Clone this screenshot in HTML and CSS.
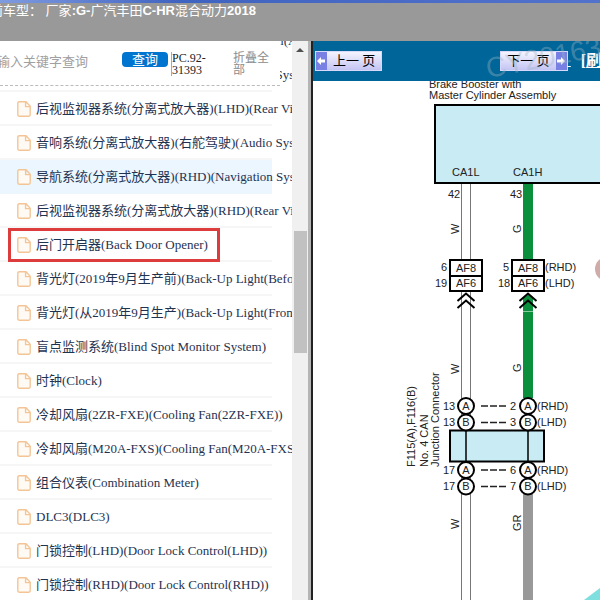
FILE: index.html
```html
<!DOCTYPE html>
<html lang="zh-CN">
<head>
<meta charset="utf-8">
<title>广汽丰田C-HR混合动力2018</title>
<link rel="stylesheet" href="styles.css">
</head>
<body>
<svg class="defs" width="0" height="0" aria-hidden="true">
  <symbol id="doc" viewBox="0 0 14 16"><path d="M2.2.8H9l4.2 4.4v8.6q0 1.4-1.4 1.4H2.2Q.8 15.2.8 13.8V2.2Q.8.8 2.2.8ZM8.6 1v4.6H13" fill="#fffaf3" stroke="#f3c596" stroke-width="1.4"/></symbol>
</svg>
<header class="top"><p class="model">前车型： 厂家<b>:G-</b>广汽丰田<b>C-HR</b>混合动力<b>2018</b></p></header>
<main class="frames">
  <aside class="side">
    <div class="tree">
      <form class="search">
        <input class="query" type="text" aria-label="关键字" placeholder="请输入关键字查询">
        <button class="go" type="button">查询</button>
        <span class="code">PC.92-31393</span>
        <a class="fold" href="#">折叠全部</a>
      </form>
      <ul class="list">
        <li><a href="#"><svg><use href="#doc"/></svg>空调系统(自动空调)(Air Conditioning System(Automatic))</a></li>
        <li><a href="#"><svg><use href="#doc"/></svg>音响系统(分离式放大器)(左舵驾驶)(Audio System(LHD))</a></li>
        <li><a href="#"><svg><use href="#doc"/></svg>后视监视器系统(分离式放大器)(LHD)(Rear View Monitor System)</a></li>
        <li><a href="#"><svg><use href="#doc"/></svg>音响系统(分离式放大器)(右舵驾驶)(Audio System(RHD))</a></li>
        <li class="hover"><a href="#"><svg><use href="#doc"/></svg>导航系统(分离式放大器)(RHD)(Navigation System(RHD))</a></li>
        <li><a href="#"><svg><use href="#doc"/></svg>后视监视器系统(分离式放大器)(RHD)(Rear View Monitor System)</a></li>
        <li><a class="marked" href="#"><svg><use href="#doc"/></svg>后门开启器(Back Door Opener)</a></li>
        <li><a href="#"><svg><use href="#doc"/></svg>背光灯(2019年9月生产前)(Back-Up Light(Before Sep. 2019 Production))</a></li>
        <li><a href="#"><svg><use href="#doc"/></svg>背光灯(从2019年9月生产)(Back-Up Light(From Sep. 2019 Production))</a></li>
        <li><a href="#"><svg><use href="#doc"/></svg>盲点监测系统(Blind Spot Monitor System)</a></li>
        <li><a href="#"><svg><use href="#doc"/></svg>时钟(Clock)</a></li>
        <li><a href="#"><svg><use href="#doc"/></svg>冷却风扇(2ZR-FXE)(Cooling Fan(2ZR-FXE))</a></li>
        <li><a href="#"><svg><use href="#doc"/></svg>冷却风扇(M20A-FXS)(Cooling Fan(M20A-FXS))</a></li>
        <li><a href="#"><svg><use href="#doc"/></svg>组合仪表(Combination Meter)</a></li>
        <li><a href="#"><svg><use href="#doc"/></svg>DLC3(DLC3)</a></li>
        <li><a href="#"><svg><use href="#doc"/></svg>门锁控制(LHD)(Door Lock Control(LHD))</a></li>
        <li><a href="#"><svg><use href="#doc"/></svg>门锁控制(RHD)(Door Lock Control(RHD))</a></li>
      </ul>
    </div>
    <div class="scroll"><span class="up"></span><span class="thumb"></span></div>
  </aside>
  <section class="view">
    <nav class="pager">
      <button class="page" type="button"><span class="arrow"><svg viewBox="0 0 10 10"><path d="M1 5 5 1v2.500h4v3H5V9Z" fill="#fff"/></svg></span><span class="word">上一 页</span></button>
      <button class="page next" type="button"><span class="word">下一 页</span><span class="arrow"><svg viewBox="0 0 10 10"><path d="M9 5 5 1v2.500H1v3h4V9Z" fill="#fff"/></svg></span></button>
      <a class="gap" href="#">&nbsp;</a>
      <span class="refresh">[<a href="#">刷新</a>]</span>
    </nav>
    <svg class="mark" viewBox="0 0 120 60" aria-hidden="true"><text x="8" y="37" transform="rotate(-11 8 37)">CY20163</text></svg>
    <svg class="diagram" viewBox="313 81 287 519" preserveAspectRatio="xMinYMin slice">
      <g class="label">
        <text x="429" y="88">Brake Booster with</text>
        <text x="429" y="99">Master Cylinder Assembly</text>
      </g>
      <rect x="435" y="105" width="190" height="78" fill="#c9ebf3" stroke="#000" stroke-width="2"/>
      <g class="wire">
        <path d="M461.500 184V600M470.500 184V600"/>
      </g>
      <rect x="523" y="184" width="10" height="214" fill="#0c8f3c"/>
      <rect x="523" y="494" width="10" height="106" fill="#999"/>
      <path d="M523 311.500H533" stroke="#8ccba3"/>
      <g class="label">
        <text x="452" y="176">CA1L</text><text x="513" y="176">CA1H</text>
        <text x="448" y="198">42</text><text x="510" y="198">43</text>
        <text x="441" y="271">6</text><text x="435" y="287">19</text>
        <text x="503" y="271">5</text><text x="498" y="287">18</text>
        <text x="545" y="271">(RHD)</text><text x="545" y="287">(LHD)</text>
        <text x="443" y="410">13</text><text x="443" y="426">13</text>
        <text x="510" y="410">2</text><text x="510" y="426">3</text>
        <text x="537" y="410">(RHD)</text><text x="537" y="426">(LHD)</text>
        <text x="443" y="474">17</text><text x="443" y="490">17</text>
        <text x="510" y="474">6</text><text x="510" y="490">7</text>
        <text x="537" y="474">(RHD)</text><text x="537" y="490">(LHD)</text>
        <text transform="translate(459 234) rotate(-90)">W</text>
        <text transform="translate(521 233) rotate(-90)">G</text>
        <text transform="translate(459 374) rotate(-90)">W</text>
        <text transform="translate(521 372) rotate(-90)">G</text>
        <text transform="translate(459 529) rotate(-90)">W</text>
        <text transform="translate(521 531) rotate(-90)">GR</text>
        <text transform="translate(415 467) rotate(-90)">F115(A),F116(B)</text>
        <text transform="translate(428 467) rotate(-90)">No. 4 CAN</text>
        <text transform="translate(439 467) rotate(-90)">Junction Connector</text>
      </g>
      <g class="box">
        <rect x="450" y="260" width="32" height="16"/><rect x="450" y="276" width="32" height="15"/>
        <rect x="512" y="260" width="32" height="16"/><rect x="512" y="276" width="32" height="15"/>
      </g>
      <g class="label mid">
        <text x="466" y="272">AF8</text><text x="466" y="287">AF6</text>
        <text x="528" y="272">AF8</text><text x="528" y="287">AF6</text>
      </g>
      <path d="M521 292H535V299L528 293 521 300Z" fill="#fff"/>
      <path class="chev" d="M457.500 301 466 293.500 474.500 301M457.500 308 466 300.500 474.500 308M519.500 301 528 293.500 536.500 301M519.500 308 528 300.500 536.500 308"/>
      <rect x="450" y="430.500" width="94" height="31" fill="#c9ebf3" stroke="#000" stroke-width="2"/>
      <path d="M466 430V462M528 430V462" stroke="#000" stroke-width="1.500"/>
      <path d="M481 406H506M481 422.500H506M481 470H506M481 486.500H506" stroke="#222" stroke-width="1.500" stroke-dasharray="7 2"/>
      <g class="pin">
        <circle cx="466" cy="406" r="8"/><circle cx="466" cy="422.500" r="8"/><circle cx="528" cy="406" r="8"/><circle cx="528" cy="422.500" r="8"/>
        <circle cx="466" cy="470" r="8"/><circle cx="466" cy="486.500" r="8"/><circle cx="528" cy="470" r="8"/><circle cx="528" cy="486.500" r="8"/>
      </g>
      <g class="label mid">
        <text x="466" y="410">A</text><text x="466" y="426">B</text><text x="528" y="410">A</text><text x="528" y="426">B</text>
        <text x="466" y="474">A</text><text x="466" y="490">B</text><text x="528" y="474">A</text><text x="528" y="490">B</text>
      </g>
      <circle cx="607" cy="269" r="12" fill="#d0aca8"/>
      <path d="M584 600 600 588V600Z" fill="#7fdede"/>
    </svg>
  </section>
</main>
</body>
</html>
```
FILE: styles.css
```css
* { box-sizing: border-box; }
body {
  margin: 0;
  height: 100vh;
  display: flex;
  flex-direction: column;
  overflow: hidden;
  background: #fff;
  font: 13px/16px "Liberation Serif", "Noto Sans CJK SC", serif;
}
.defs { position: absolute; }
a { color: inherit; text-decoration: none; }
button { border: 0; padding: 0; font: inherit; }

.top {
  flex: none;
  height: 41px;
  overflow: hidden;
  background: linear-gradient(90deg, #7f9be0, #3f63c0 30%, #5272cc) top / 100% 3px no-repeat #999;
  padding-top: 3px;
  color: #fff;
  font: 13px/16px "Liberation Sans", "Noto Sans CJK SC", sans-serif;
}
.model { margin: 0 0 0 -10px; white-space: nowrap; }

.frames { flex: 1; min-height: 0; display: flex; }
.side {
  flex: 0 0 313px;
  min-width: 0;
  display: flex;
  border-right: 2px solid #222;
}
.tree { position: relative; flex: 1; min-width: 0; overflow: hidden; }
.search {
  position: absolute;
  z-index: 1;
  top: 0;
  left: 0;
  right: 12px;
  height: 45px;
  display: flex;
  align-items: flex-start;
  padding-top: 11px;
  background: #fff;
  border-bottom: 1px dashed #bbb;
}
.query {
  flex: none;
  width: 138px;
  height: 20px;
  margin-left: -16px;
  padding: 0;
  border: 0;
  font: 13px/20px "Liberation Sans", "Noto Sans CJK SC", sans-serif;
}
.query::placeholder { color: #a0a0a0; opacity: 1; }
.go {
  flex: none;
  width: 46px;
  height: 15px;
  border-radius: 4px;
  background: #0075cf;
  color: #fff;
  line-height: 15px;
}
.code, .fold { flex: none; font-size: 12px; line-height: 12px; }
.code { width: 44px; margin-left: 3px; border-left: 1px solid #aaa; color: #222; }
.fold { width: 40px; margin-left: 18px; color: #8c8c8c; }

.list { list-style: none; margin: -17px 20px 0 0; padding: 0; }
.list li {
  height: 34px;
  border-bottom: 2px solid #f6f6f6;
  padding-left: 17px;
  white-space: nowrap;
  color: #1f3350;
}
.list a { position: relative; display: inline-flex; align-items: center; gap: 5px; height: 34px; }
.list svg { flex: none; width: 14px; height: 16px; }
.list .hover { background: #ebf6ff; border-color: #ebf6ff; }
.marked::after {
  content: "";
  position: absolute;
  inset: 0 -12px 0 -9px;
  border: 3px solid #dd3c3c;
}

.scroll {
  flex: none;
  width: 19px;
  display: flex;
  flex-direction: column;
  align-items: center;
  background: #f0f0f0;
  border-right: 3px solid #b4b4b4;
}
.up { margin-top: 7px; border: 4px solid transparent; border-top: 0; border-bottom-color: #505050; }
.thumb { width: 13px; height: 122px; margin-top: 179px; background: #c1c1c1; }

.view { position: relative; flex: 1; min-width: 0; display: flex; flex-direction: column; overflow: hidden; }
.pager {
  flex: none;
  height: 40px;
  display: flex;
  align-items: center;
  padding-left: 2px;
  background: #006699;
  color: #fff;
  white-space: nowrap;
}
.page {
  flex: none;
  height: 20px;
  display: flex;
  align-items: center;
  border: 1px solid #d8d8fa;
  background: linear-gradient(#f4f4ff, #c4c4f4);
  color: #000;
}
.word { padding: 0 6px; font-size: 13px; line-height: 18px; }
.arrow { width: 11px; height: 18px; display: flex; align-items: center; background: #7880e4; }
.arrow svg { width: 10px; height: 10px; }
.next { margin-left: 118px; }
.gap { text-decoration: underline; }
.refresh { margin-left: 10px; font-size: 16px; font-weight: bold; }
.refresh a { text-decoration: underline; }
.mark { position: absolute; top: 0; right: 0; width: 120px; height: 60px; }
.mark text { font: 28px "Liberation Sans", sans-serif; fill: #9db4c2; fill-opacity: .4; }

.diagram { flex: 1; min-height: 0; width: 100%; }
.label { font: 11px "Liberation Sans", sans-serif; fill: #222; }
.mid { text-anchor: middle; }
.wire { fill: none; stroke: #777; }
.box { fill: #fff; stroke: #000; stroke-width: 2; }
.pin { fill: #fff; stroke: #000; stroke-width: 2; }
.chev { fill: none; stroke: #000; stroke-width: 2; }
```
